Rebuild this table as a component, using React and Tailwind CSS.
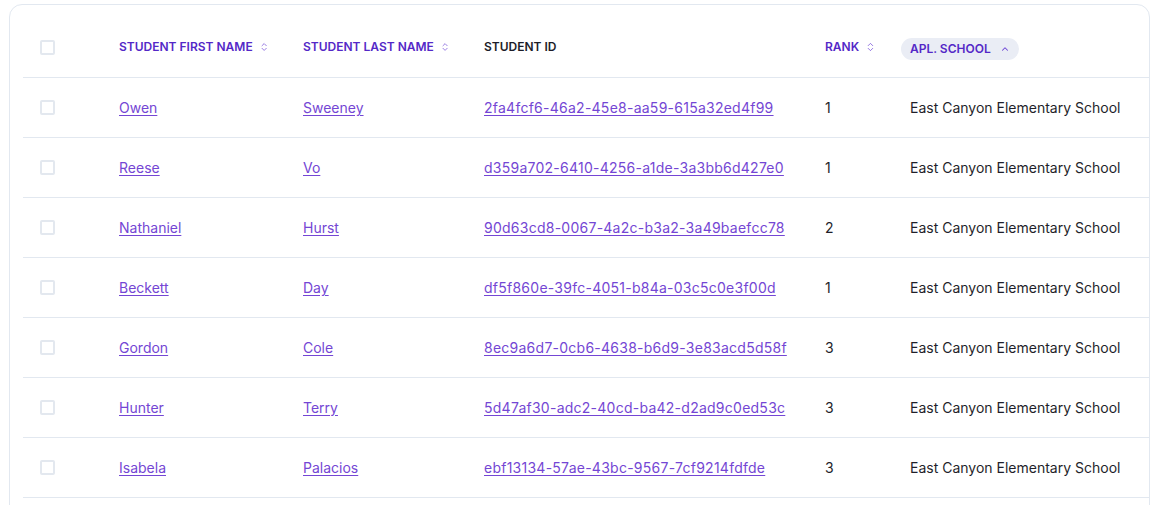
import { ChevronsUpDown, ChevronUp } from 'lucide-react'

const students = [
  { first: 'Owen', last: 'Sweeney', id: '2fa4fcf6-46a2-45e8-aa59-615a32ed4f99', rank: 1 },
  { first: 'Reese', last: 'Vo', id: 'd359a702-6410-4256-a1de-3a3bb6d427e0', rank: 1 },
  { first: 'Nathaniel', last: 'Hurst', id: '90d63cd8-0067-4a2c-b3a2-3a49baefcc78', rank: 2 },
  { first: 'Beckett', last: 'Day', id: 'df5f860e-39fc-4051-b84a-03c5c0e3f00d', rank: 1 },
  { first: 'Gordon', last: 'Cole', id: '8ec9a6d7-0cb6-4638-b6d9-3e83acd5d58f', rank: 3 },
  { first: 'Hunter', last: 'Terry', id: '5d47af30-adc2-40cd-ba42-d2ad9c0ed53c', rank: 3 },
  { first: 'Isabela', last: 'Palacios', id: 'ebf13134-57ae-43bc-9567-7cf9214fdfde', rank: 3 },
]

const cols = 'grid grid-cols-[79px_184px_181px_341px_85px_1fr]'

function Checkbox() {
  return <span className="block w-[15px] h-[15px] border-2 border-[#e3e8ef] rounded-[2px] bg-white" />
}

function SortHead({ label }) {
  return (
    <div className="flex items-center gap-[6px] px-[17px] whitespace-nowrap text-[12px] font-semibold text-[#5428c7]">
      {label}
      <ChevronsUpDown size={16} strokeWidth={1.6} className="text-[#6d45d6]" />
    </div>
  )
}

export default function App() {
  return (
    <div className="bg-white min-h-screen pt-1 pl-[9px] pr-[11px] font-['Inter',sans-serif]">
      <div className="border border-[#e2e8f0] rounded-[13px] pl-[13px] pt-3 h-[540px] overflow-hidden">
        <div className={`${cols} h-[61px] items-center border-b border-[#e2e8f0]`}>
          <div className="pl-[17px]"><Checkbox /></div>
          <SortHead label="STUDENT FIRST NAME" />
          <SortHead label="STUDENT LAST NAME" />
          <div className="px-[17px] whitespace-nowrap text-[12px] font-semibold text-[#1c1c28]">STUDENT ID</div>
          <SortHead label="RANK" />
          <div className="px-[8px]">
            <span className="inline-flex items-center gap-[9px] h-[22px] px-[9px] rounded-full bg-[#eaedf5] whitespace-nowrap text-[12px] font-semibold text-[#5428c7]">
              APL. SCHOOL
              <ChevronUp size={10} strokeWidth={2.5} className="text-[#6d45d6]" />
            </span>
          </div>
        </div>
        {students.map((s) => (
          <div key={s.id} className={`${cols} h-[60px] items-center border-b border-[#e2e8f0] text-[14px]`}>
            <div className="pl-[17px]"><Checkbox /></div>
            <div className="px-[17px]"><a href="#" className="text-[#7446d4] underline underline-offset-2">{s.first}</a></div>
            <div className="px-[17px]"><a href="#" className="text-[#7446d4] underline underline-offset-2">{s.last}</a></div>
            <div className="px-[17px] whitespace-nowrap"><a href="#" className="text-[#7446d4] underline underline-offset-2 tracking-[0.018em]">{s.id}</a></div>
            <div className="px-[17px] text-[#1f1f2b]">{s.rank}</div>
            <div className="px-[17px] text-[#1f1f2b] whitespace-nowrap">East Canyon Elementary School</div>
          </div>
        ))}
      </div>
    </div>
  )
}
